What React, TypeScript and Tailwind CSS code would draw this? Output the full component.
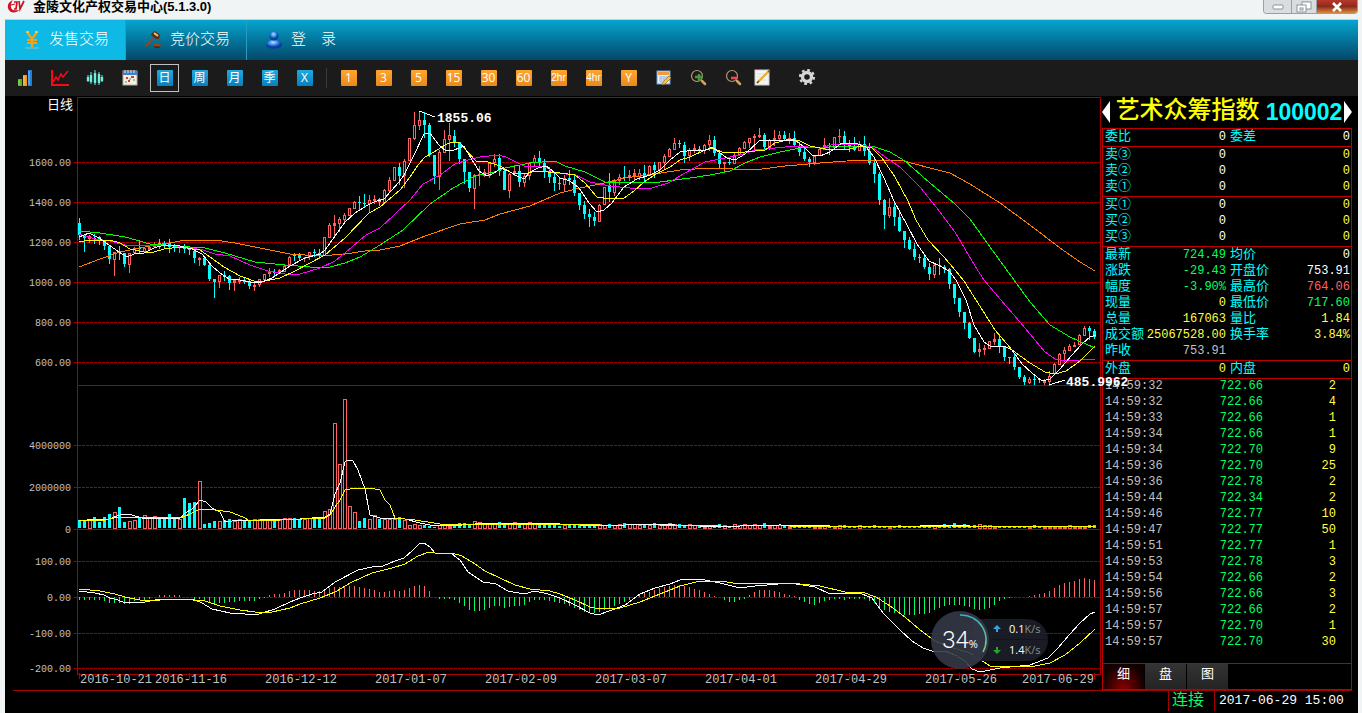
import React, { useState } from 'react';

// [rising, high, body top, body bottom, low] in chart units, one candle every 5 units
const candles: number[][] = [
  [0,218,223,235,240],[0,235,235,238,252],[1,235,236,239,243],[0,234,238,239,244],[0,236,237,241,245],[0,240,241,246,250],[0,246,246,259,264],[1,252,252,260,276],
  [0,246,252,253,260],[0,253,253,264,267],[1,253,253,265,273],[1,247,248,253,254],[0,240,248,249,253],[1,247,248,252,253],[1,246,247,250,251],[1,242,244,247,248],
  [0,239,243,245,249],[0,241,244,246,248],[0,239,243,247,253],[0,244,246,248,252],[1,245,247,248,253],[0,244,247,249,253],[0,247,249,250,255],[0,250,251,258,263],
  [1,257,258,260,266],[0,258,258,265,266],[0,264,265,279,281],[0,279,279,282,298],[1,275,275,282,288],[0,271,275,277,281],[0,275,276,283,290],[1,279,280,283,291],
  [1,277,280,282,284],[0,277,280,282,284],[0,280,281,286,289],[1,283,285,287,291],[1,279,279,285,287],[1,274,274,280,281],[1,268,272,274,277],[0,269,272,273,277],
  [1,269,270,272,274],[1,265,266,272,272],[1,256,257,265,266],[0,253,255,256,261],[0,253,254,258,261],[1,257,258,259,262],[1,252,252,257,260],[0,249,252,253,257],
  [0,249,253,255,259],[1,237,237,256,256],[1,223,225,238,238],[1,215,223,226,236],[1,217,219,224,232],[1,213,215,220,222],[1,208,208,216,216],[1,201,202,209,209],
  [0,196,202,203,210],[0,194,203,204,207],[1,195,200,204,213],[1,195,199,201,204],[0,198,199,202,206],[1,189,190,203,203],[1,177,180,191,193],[1,167,167,181,181],
  [0,163,167,176,185],[1,159,161,176,188],[1,138,138,161,161],[1,112,125,139,140],[1,111,120,126,130],[0,112,120,125,138],[0,123,125,155,157],[0,155,155,176,184],
  [1,150,152,177,190],[1,130,139,153,153],[1,123,135,140,161],[0,130,136,142,147],[0,142,142,159,164],[0,159,159,172,184],[0,172,172,188,192],[1,174,175,189,209],
  [1,166,174,175,186],[1,169,172,176,177],[1,163,163,176,178],[1,154,159,163,167],[0,154,158,171,176],[0,168,171,190,190],[1,173,174,191,198],[1,165,171,174,176],
  [0,166,171,182,187],[1,174,176,183,187],[1,162,163,176,180],[1,155,158,163,167],[0,151,158,163,167],[0,159,163,171,178],[0,167,171,177,183],[0,172,177,183,191],
  [0,178,183,184,190],[1,175,178,185,191],[0,170,178,180,185],[0,174,180,193,196],[0,193,193,205,210],[0,201,205,214,219],[0,209,214,217,227],[0,212,217,221,226],
  [1,204,205,222,222],[1,187,187,205,205],[0,173,185,192,202],[1,179,181,193,196],[1,174,177,181,185],[0,166,177,178,181],[1,170,175,178,181],[1,169,173,176,180],
  [1,169,173,177,180],[0,165,173,176,183],[1,165,166,176,176],[0,162,165,170,178],[1,162,162,170,174],[1,154,156,163,169],[1,148,149,157,157],[1,138,143,150,150],
  [0,140,143,144,148],[0,142,145,156,163],[1,148,150,156,161],[1,144,148,151,153],[0,146,149,150,152],[1,144,145,151,154],[1,135,140,145,151],[0,136,140,153,156],
  [0,153,153,164,168],[1,162,162,164,172],[0,158,162,163,165],[1,153,155,164,164],[1,147,148,155,155],[1,141,142,149,149],[1,138,138,143,148],[1,134,136,138,151],
  [1,128,135,137,138],[0,133,135,147,149],[1,139,140,148,150],[1,130,138,140,146],[1,131,135,139,140],[0,131,135,139,140],[1,133,138,139,144],[0,131,138,145,147],
  [0,142,146,152,156],[0,148,152,159,161],[0,157,159,162,167],[1,155,156,163,165],[1,148,149,156,156],[1,138,145,150,150],[0,143,145,146,155],[1,137,137,148,148],
  [1,129,136,137,143],[0,131,136,145,150],[0,140,145,147,152],[0,137,146,150,151],[1,141,144,151,151],[0,136,144,151,156],[0,143,151,163,165],[0,157,163,174,183],
  [0,172,174,200,205],[0,199,200,215,229],[1,198,207,216,218],[0,203,207,217,226],[0,212,217,231,232],[0,231,231,240,248],[0,237,240,249,250],[0,243,249,257,260],
  [0,254,257,258,263],[0,256,258,267,269],[0,263,267,274,280],[1,264,265,275,278],[0,258,265,266,275],[0,265,267,269,273],[0,268,269,284,289],[0,284,284,298,304],
  [0,298,298,312,317],[0,312,312,323,329],[0,322,323,338,339],[0,338,338,352,353],[1,343,349,352,357],[1,345,348,350,355],[1,341,341,349,349],[1,333,339,342,345],
  [0,334,339,347,353],[0,347,347,357,361],[0,357,357,358,364],[0,353,357,367,370],[0,367,367,377,379],[0,375,377,382,385],[1,377,379,383,384],[0,374,379,380,385],
  [0,378,379,380,383],[1,379,381,383,385],[1,371,376,382,386],[1,363,364,374,374],[1,353,354,365,365],[1,347,350,354,362],[1,344,346,351,351],[1,342,345,347,347],
  [1,334,335,345,345],[1,326,328,336,336],[0,326,328,331,340],[0,329,331,337,339],
];

// top of each volume bar, base line at 528
const volumes = [
  520,521,520,517,522,517,514,512,507,522,521,520,518,515,518,516,519,519,514,518,519,498,503,502,481,524,523,521,521,520,
  519,521,519,521,520,519,519,520,519,520,520,518,518,518,519,519,518,519,517,511,509,423,464,399,506,512,521,518,519,515,
  519,519,519,519,517,520,525,524,525,525,526,527,525,525,526,526,523,523,524,521,522,524,523,523,522,525,523,522,524,524,
  522,523,524,523,525,524,526,525,525,524,525,524,525,526,524,525,524,525,524,523,524,524,525,524,525,523,525,525,523,524,
  524,525,524,525,525,526,525,525,524,525,526,524,525,524,525,524,525,523,526,525,525,526,526,525,526,526,525,526,526,525,
  526,526,525,525,526,526,525,526,526,525,526,527,526,526,525,526,526,526,526,525,525,525,526,524,525,523,525,524,526,525,
  524,525,525,526,526,527,526,527,526,527,526,525,526,527,526,526,527,526,525,526,526,526,525,525,
];

// tip of each oscillator bar, zero line at 597
const bars = [
  600,600,600,600,600,601,603,603,603,604,604,601,600,600,599,597,595,595,595,595,595,597,597,599,599,600,603,604,603,603,
  602,602,601,601,601,601,599,598,595,594,594,593,591,590,590,590,590,591,591,590,588,587,587,587,586,586,587,588,589,590,
  592,592,591,590,591,590,588,586,585,586,591,597,599,599,599,600,603,606,610,611,611,610,608,606,606,608,607,606,606,605,
  602,600,600,600,601,602,603,604,606,608,610,612,613,613,612,610,608,606,604,602,600,598,595,593,592,590,588,587,586,585,
  585,586,587,589,590,592,594,596,597,600,602,602,600,599,595,592,590,590,590,591,592,594,595,596,600,602,604,605,603,601,
  600,599,599,600,599,599,599,599,601,603,607,610,612,613,614,615,615,615,614,614,613,610,608,606,605,605,605,606,607,609,
  610,609,608,605,601,599,598,597,597,597,596,595,594,593,591,588,585,583,582,581,579,578,579,580,
];

const lines = [
  { color: '#ff8000', points: '79,267 100,259 120,252 140,248 155,245 170,243 185,240 215,240 235,243 260,248 290,254 320,256 345,254 365,251 380,250 400,246 425,236 460,224 485,220 500,214 530,206 560,193 580,188 600,184 625,178 655,174 680,170 710,168 755,170 785,166 820,163 860,160 900,160 930,168 950,173 970,184 1000,203 1030,225 1060,248 1080,262 1095,271' },
  { color: '#00ff00', points: '79,231 100,233 125,237 150,244 175,246 205,248 225,253 255,262 285,265 310,267 330,267 345,263 360,257 380,245 403,230 430,204 453,188 475,176 494,172 505,168 530,163 555,161 565,166 585,172 605,182 660,182 690,178 710,175 730,171 745,163 760,157 780,152 800,148 830,147 850,146 875,147 890,152 905,161 930,183 955,204 970,219 990,247 1014,280 1030,302 1050,325 1070,337 1095,348' },
  { color: '#ff00ff', points: '79,234 95,239 110,241 125,245 155,246 170,245 190,248 203,250 215,254 230,256 250,265 268,271 285,274 300,274 320,268 335,261 352,247 366,235 380,228 395,214 410,200 423,184 440,175 455,164 468,160 480,157 498,155 506,157 524,166 545,167 556,173 576,175 590,182 610,186 630,188 652,188 668,183 685,173 705,162 725,158 740,155 755,150 775,148 795,146 820,148 835,144 862,145 872,147 885,157 900,167 920,187 940,212 955,232 975,266 984,280 1000,299 1020,322 1045,352 1055,359 1066,361 1095,359' },
  { color: '#ffff00', points: '79,242 90,240 110,240 120,243 130,249 144,252 154,252 164,249 180,247 200,250 210,257 224,267 240,276 254,281 265,281 280,278 295,271 308,264 325,255 345,238 369,213 380,207 400,190 410,177 418,165 425,157 434,152 445,145 452,142 460,143 466,150 476,161 488,162 500,166 512,173 525,174 535,171 548,172 560,173 575,175 585,183 597,197 610,199 624,198 634,191 644,182 656,174 670,167 680,160 690,157 705,150 712,148 722,152 735,153 765,150 775,143 790,139 800,141 810,146 825,149 850,149 860,146 872,148 882,158 895,177 908,201 916,220 928,240 944,257 955,270 964,281 976,300 995,330 1012,350 1030,363 1045,372 1055,374 1066,371 1080,361 1095,346' },
  { color: '#ffffff', points: '79,237 89,233 99,238 109,245 119,252 127,257 134,254 144,253 154,248 164,245 180,246 192,249 202,254 212,266 220,273 229,279 240,280 250,282 262,282 272,278 290,266 305,258 320,254 325,250 335,236 345,222 355,213 368,205 374,202 384,199 399,182 404,175 414,155 424,134 430,133 439,145 446,151 454,150 464,146 469,155 479,171 487,176 494,173 501,168 510,172 517,176 524,179 530,172 538,168 546,166 554,172 560,178 570,181 579,188 589,203 597,212 604,210 612,203 624,187 637,179 650,175 660,170 670,160 680,152 694,150 706,150 712,147 720,153 727,158 735,160 745,154 759,141 775,140 795,140 803,146 812,155 820,156 830,152 842,143 855,143 866,147 874,157 884,178 894,201 907,225 917,244 929,261 940,266 949,271 956,280 966,300 974,325 984,342 990,346 1004,346 1012,350 1022,364 1032,373 1042,381 1050,379 1060,369 1072,355 1082,344 1090,337 1096,335' },
  // volume averages
  { color: '#ffffff', points: '79,521 95,519 109,519 123,514 132,515 145,519 165,518 180,518 185,513 192,509 200,500 206,502 212,508 220,512 225,522 240,520 260,520 300,519 325,517 330,514 335,494 340,483 345,462 347,460 353,461 358,470 365,489 370,515 380,518 405,519 420,523 430,525 450,526 475,524 500,523 530,523 560,524 600,526 650,524 700,526 740,526 780,525 830,526 900,527 940,525 1000,527 1095,526' },
  { color: '#ffff00', points: '79,520 105,520 118,517 160,517 180,518 190,514 200,509 215,510 230,512 243,517 250,521 280,520 325,518 331,514 335,507 340,500 345,490 355,488 375,489 380,490 385,500 390,505 395,518 415,520 440,524 460,525 500,524 550,524 600,525 660,525 720,526 790,526 880,527 950,526 1095,527' },
  // oscillator
  { color: '#ffffff', points: '79,591 95,593 104,595 110,598 118,600 125,603 145,602 160,599 178,599 195,600 202,603 212,609 230,613 245,614 256,615 262,613 275,609 290,602 300,598 312,594 322,592 335,582 358,570 372,567 383,566 395,561 404,558 412,551 419,544 424,543 430,547 435,553 452,554 460,560 468,572 483,582 496,584 508,591 524,594 535,591 548,594 560,598 575,605 590,613 598,615 612,610 625,605 640,594 655,588 670,584 680,580 700,579 720,583 740,588 755,586 790,583 815,587 830,594 845,593 862,594 872,598 884,614 900,630 912,641 923,648 935,652 945,651 955,655 965,661 972,669 980,672 990,670 1000,668 1030,665 1048,658 1058,648 1070,634 1080,623 1090,614 1095,612' },
  { color: '#ffff00', points: '79,589 100,591 115,594 125,597 140,600 160,600 180,599 205,601 220,606 240,610 255,612 272,612 290,608 300,604 320,598 335,592 352,582 372,573 392,568 405,564 418,556 429,552 435,553 452,553 462,556 475,564 485,571 500,578 515,585 530,589 550,591 560,594 575,600 590,607 600,609 620,608 640,602 660,594 680,586 700,581 720,581 740,584 770,583 800,584 820,586 845,592 862,592 876,597 890,606 905,617 920,630 935,641 950,647 970,653 990,666 1000,667 1020,666 1035,666 1050,663 1065,655 1080,643 1095,629' },
];

const gridLabels: [number, string][] = [
  [162, '1600.00'], [202, '1400.00'], [242, '1200.00'], [282, '1000.00'], [322, '800.00'], [362, '600.00'],
  [445, '4000000'], [487, '2000000'], [529, '0'],
  [561, '100.00'], [597, '0.00'], [633, '-100.00'], [668, '-200.00'],
];

const dates: [number, string][] = [
  [116, '2016-10-21'], [191, '2016-11-16'], [301, '2016-12-12'], [411, '2017-01-07'], [521, '2017-02-09'],
  [631, '2017-03-07'], [741, '2017-04-01'], [851, '2017-04-29'], [961, '2017-05-26'], [1058, '2017-06-29'],
];
const dateTicks = [79, 189, 299, 409, 519, 629, 739, 849, 959, 1094];

const Chart: React.FC = () => (
  <svg viewBox="5 96 1097 594" className="relative z-10 block w-full overflow-visible" role="img" aria-label="日线">
    <defs>
      <pattern id="dash" x="78" y="0" width="4" height="1" patternUnits="userSpaceOnUse">
        <rect width="3" height="1" fill="#a80000" />
      </pattern>
    </defs>
    <g shapeRendering="crispEdges">
      {gridLabels.map(([y]) => (
        <g key={y}>
          {y !== 529 && <path d={`M78 ${y}H1100V${y + 1}H78z`} fill="url(#dash)" />}
          <rect x="74" y={y} width="3" height="1" fill="#a80000" />
        </g>
      ))}
      <g fill="#a80000">
        <rect x="77" y="97" width="1024" height="1" />
        <rect x="77" y="385" width="1024" height="1" />
        <rect x="77" y="529" width="1024" height="1" />
        <rect x="77" y="674" width="1024" height="1" />
        <rect x="77" y="97" width="1" height="578" />
        <rect x="1100" y="97" width="1" height="578" />
        {dateTicks.map((x) => <rect key={x} x={x} y="673" width="1" height="6" />)}
      </g>

      {candles.map(([up, high, top, bottom, low], i) => {
        const x = 79 + i * 5;
        const color = up ? '#ff6060' : '#00ffff';
        const h = Math.max(bottom - top, 1);
        return (
          <g key={i} fill={color}>
            <rect x={x} y={high} width="1" height={low - high} />
            <rect x={x - 1} y={top} width="3" height={h} />
            {up === 1 && h > 3 && <rect x={x} y={top + 1} width="1" height={h - 2} fill="#000" />}
          </g>
        );
      })}
      {volumes.map((top, i) => {
        const x = 78 + i * 5;
        if (!candles[i][0]) return <rect key={i} x={x} y={top} width="3" height={528 - top} fill="#00ffff" />;
        return (
          <g key={i}>
            <rect x={x} y={top} width="4" height={529 - top} fill="#ff6060" />
            {top < 526 && <rect x={x + 1} y={top + 1} width="2" height={527 - top} fill="#000" />}
          </g>
        );
      })}
      {bars.map((tip, i) => (
        <rect key={i} x={79 + i * 5} y={Math.min(tip, 597)} width="1" height={Math.abs(tip - 597)} fill={tip > 597 ? '#00ff60' : '#ff6060'} />
      ))}
      {lines.map((l, i) => <polyline key={i} points={l.points} fill="none" stroke={l.color} />)}
      <path d="M419 111L435 117M1049 385L1065 380" stroke="#fff" fill="none" />
    </g>
    <g className="text-[10px]" fill="#c0c0c0" textAnchor="end">
      {gridLabels.map(([y, t]) => <text key={y} x="71" y={y + 4}>{t}</text>)}
    </g>
    <g className="text-[12px]" fill="#c0c0c0" textAnchor="middle">
      {dates.map(([x, t]) => <text key={x} x={x} y="683">{t}</text>)}
    </g>
    <text x="47" y="109" className="text-[13px]" fill="#fff">日线</text>
    <g className="text-[13px] font-bold" fill="#fff">
      <text x="437" y="122">1855.06</text>
      <text x="1066" y="386">485.9962</text>
    </g>
  </svg>
);

const YenIcon = () => (
  <svg width="18" height="20" viewBox="0 0 18 20">
    <path d="M4 2L9 9L14 2M9 9V17M4 10H14M4 13H14" fill="none" stroke="#f0a41e" strokeWidth="2.2" />
    <path d="M3 2H6M12 2H15" stroke="#ffd35a" strokeWidth="1.5" />
    <path d="M2 18H16" stroke="#8fc0cc" />
  </svg>
);

const GavelIcon = () => (
  <svg width="18" height="20" viewBox="0 0 18 20">
    <path d="M2 16L11 6" stroke="#8a4a22" strokeWidth="2" strokeLinecap="round" />
    <path d="M8 3L11 1L16 5L15 9L12 9L7 5z" fill="#5a2c12" />
    <path d="M10 3L14 6" stroke="#e8c08a" strokeWidth="2" />
    <path d="M9 15C9 19 17 19 17 15z" fill="#4a1f0c" />
    <ellipse cx="13" cy="15" rx="4" ry="1.6" fill="#8f4a22" />
  </svg>
);

const UserIcon = () => (
  <svg width="18" height="20" viewBox="0 0 18 20">
    <defs>
      <radialGradient id="user" cx="45%" cy="30%">
        <stop offset="0" stopColor="#c4e4ff" />
        <stop offset="0.5" stopColor="#3d94ee" />
        <stop offset="1" stopColor="#0d3c9c" />
      </radialGradient>
    </defs>
    <path d="M1 15C2 8 16 8 17 15C17 20 1 20 1 15z" fill="url(#user)" />
    <circle cx="9" cy="6" r="4.5" fill="url(#user)" />
  </svg>
);

const Logo = () => (
  <svg width="18" height="13" viewBox="0 0 18 13">
    <path d="M6 0C0 2 -1 9 4 12C7 13 11 12 12 10C7 11 3 10 4 5C4 3 5 1 6 0z" fill="#d01020" />
    <path d="M7 2H10L9 9H7M12 1L13 9L17 1" fill="none" stroke="#c81422" strokeWidth="1.7" />
    <path d="M4 5L8 4" stroke="#c81422" />
  </svg>
);

const ChartBars = () => (
  <svg width="16" height="18" viewBox="0 0 16 18">
    <rect x="1" y="10" width="4" height="7" fill="#57b512" />
    <rect x="6" y="6" width="4" height="11" fill="#f59a12" />
    <rect x="11" y="1" width="4" height="16" fill="#1f7fe0" />
    <path d="M2 11V16M7 7V16M12 2V16" stroke="#ffffff" strokeOpacity="0.5" />
  </svg>
);

const TrendIcon = () => (
  <svg width="18" height="18" viewBox="0 0 18 18" fill="none" stroke="#f50a1a">
    <path d="M1 1V16H18" strokeWidth="2" />
    <path d="M2 13L5 8L7 11L10 5L12 8L17 2" strokeWidth="1.5" />
  </svg>
);

const WaveIcon = () => (
  <svg width="18" height="18" viewBox="0 0 18 18" stroke="#6ff0dc">
    <path d="M2 6V13M5 3V15M9 1V16M13 3V16M16 6V13" />
    <path d="M2 8V12M5 6V13M9 4V14M13 5V14M16 8V12" strokeWidth="2.4" />
  </svg>
);

const CalendarIcon = () => (
  <svg width="16" height="18" viewBox="0 0 16 18">
    <rect x="1" y="2" width="14" height="14" fill="#f2efe6" stroke="#b9ad98" />
    <rect x="1" y="2" width="14" height="4" fill="#3f7fd0" />
    <path d="M3 1V4M6 1V4M9 1V4M12 1V4" stroke="#dbe8fa" />
    <path d="M4 9H6M9 8H12M6 12H8" stroke="#e03818" strokeWidth="2" />
    <path d="M7 10H9M11 11H13M3 13H5" stroke="#777" />
  </svg>
);

const CalendarEdit = () => (
  <svg width="16" height="16" viewBox="0 0 16 16">
    <rect x="1" y="1" width="13" height="13" fill="#e9f2fd" stroke="#6d9edc" />
    <rect x="2" y="2" width="11" height="3" fill="#f09a3c" />
    <path d="M3 7H12M3 9H12M3 11H10M5 6V13M8 6V12M11 6V10" stroke="#9cbbe4" />
    <path d="M6 15L7 12L13 6L15 8L9 14z" fill="#f5c242" stroke="#9a6a1a" strokeWidth="0.7" />
  </svg>
);

const ZoomIcon: React.FC<{ sign: 'in' | 'out' }> = ({ sign }) => (
  <svg width="18" height="18" viewBox="0 0 18 18">
    <circle cx="7" cy="7" r="5.5" fill="none" stroke="#b59a72" strokeWidth="1.2" />
    <path d="M12 12L15 15" stroke="#d8a060" strokeWidth="2.5" strokeLinecap="round" />
    {sign === 'in'
      ? <path d="M9 5V12M5 8H13" stroke="#4a9a3c" strokeWidth="2.4" />
      : <path d="M6 9H13" stroke="#f04a42" strokeWidth="2.6" />}
  </svg>
);

const NoteIcon = () => (
  <svg width="18" height="18" viewBox="0 0 18 18">
    <rect x="1" y="1" width="14" height="15" fill="#f4f4f2" stroke="#cfcfcb" />
    <path d="M3 5H11M3 8H9M3 11H12" stroke="#ddd" />
    <path d="M3 14L15 2" stroke="#e5ad2b" strokeWidth="2.2" />
    <path d="M3 14L5 12M14 3L16 1" stroke="#555" strokeWidth="1.5" />
  </svg>
);

const GearIcon = () => (
  <svg width="18" height="18" viewBox="0 0 18 18" fill="none" stroke="#d6d6d6">
    <circle cx="9" cy="8" r="4.5" strokeWidth="3.4" />
    <circle cx="9" cy="8" r="7" strokeWidth="2.2" strokeDasharray="2.75 2.75" />
  </svg>
);

const navItems = [
  { icon: <YenIcon />, label: '发售交易' },
  { icon: <GavelIcon />, label: '竞价交易' },
  { icon: <UserIcon />, label: '登　录' },
];
const periods = ['日', '周', '月', '季', 'X'];
const minutes = ['1', '3', '5', '15', '30', '60', '2hr', '4hr', 'Y'];

const W = 'text-white';
const Y = 'text-[#ffff40]';
const G = 'text-[#00ff60]';
const R = 'text-[#ff6060]';
const S = 'text-[#c0c0c0]';

type Row = [string, string, string, string, string, string];
const quoteSections: Row[][] = [
  [['委比', '0', W, '委差', '0', W]],
  [['卖③', '0', W, '', '0', Y], ['卖②', '0', W, '', '0', Y], ['卖①', '0', W, '', '0', Y]],
  [['买①', '0', W, '', '0', Y], ['买②', '0', W, '', '0', Y], ['买③', '0', W, '', '0', Y]],
  [
    ['最新', '724.49', G, '均价', '0', W],
    ['涨跌', '-29.43', G, '开盘价', '753.91', W],
    ['幅度', '-3.90%', G, '最高价', '764.06', R],
    ['现量', '0', Y, '最低价', '717.60', G],
    ['总量', '167063', Y, '量比', '1.84', Y],
    ['成交额', '25067528.00', Y, '换手率', '3.84%', Y],
    ['昨收', '753.91', S, '', '', W],
  ],
  [['外盘', '0', Y, '内盘', '0', Y]],
];

const trades = [
  ['14:59:32', '722.66', '2'], ['14:59:32', '722.66', '4'], ['14:59:33', '722.66', '1'], ['14:59:34', '722.66', '1'],
  ['14:59:34', '722.70', '9'], ['14:59:36', '722.70', '25'], ['14:59:36', '722.78', '2'], ['14:59:44', '722.34', '2'],
  ['14:59:46', '722.77', '10'], ['14:59:47', '722.77', '50'], ['14:59:51', '722.77', '1'], ['14:59:53', '722.78', '3'],
  ['14:59:54', '722.66', '2'], ['14:59:56', '722.66', '3'], ['14:59:57', '722.66', '2'], ['14:59:57', '722.70', '1'],
  ['14:59:57', '722.70', '30'],
];

const QuoteTable: React.FC<{ rows: Row[] }> = ({ rows }) => (
  <div className="border-b border-[#c00000] px-px pb-px">
    <table className="w-full table-fixed">
      <colgroup>
        <col className="w-10" />
        <col className="w-[82px]" />
        <col className="w-12" />
        <col />
      </colgroup>
      <tbody>
        {rows.map(([a, av, ac, b, bv, bc]) => (
          <tr key={a} className="h-4 whitespace-nowrap leading-4">
            <th className="pl-px text-left text-[13px] font-normal text-[#00ffff]">{a}</th>
            <td className={`${ac} text-right text-[12px]`}>{av}</td>
            <th className="pl-1 text-left text-[13px] font-normal text-[#00ffff]">{b}</th>
            <td className={`${bc} text-right text-[12px]`}>{bv}</td>
          </tr>
        ))}
      </tbody>
    </table>
  </div>
);

const SpeedWidget = () => (
  <div className="absolute bottom-[21px] right-[54px] z-20 flex items-center font-['Open_Sans',sans-serif]">
    <div className="relative z-10 flex h-[58px] w-[58px] items-center justify-center rounded-full bg-[#343847]/90 text-white">
      <svg className="absolute inset-0" viewBox="0 0 58 58" fill="none">
        <defs>
          <linearGradient id="ring" x1="0" y1="0" x2="0" y2="1">
            <stop offset="0" stopColor="#35b5c0" />
            <stop offset="1" stopColor="#7ecb7a" />
          </linearGradient>
        </defs>
        <path d="M29 4A25 25 0 0 1 52 41" stroke="url(#ring)" strokeWidth="1.5" />
      </svg>
      <span className="font-['Roboto',sans-serif] text-2xl font-light">34</span>
      <span className="pt-2 text-[11px]">%</span>
    </div>
    <div className="-ml-4 flex h-[42px] w-[75px] flex-col justify-center rounded-r-full bg-[#1a1d26]/95 pl-5 text-[11px] text-white">
      <div className="flex h-[21px] items-center gap-2 border-b border-[#12141b]">
        <svg width="8" height="8" viewBox="0 0 8 8"><path d="M4 0L8 4H5V7H3V4H0z" fill="#3aa0e0" /></svg>
        <span>0.1<span className="text-[#8b8e96]">K/s</span></span>
      </div>
      <div className="flex h-[21px] items-center gap-2">
        <svg width="8" height="8" viewBox="0 0 8 8"><path d="M4 7L8 3H5V0H3V3H0z" fill="#28a428" /></svg>
        <span>1.4<span className="text-[#8b8e96]">K/s</span></span>
      </div>
    </div>
  </div>
);

const App: React.FC = () => {
  const [nav, setNav] = useState(0);
  const [period, setPeriod] = useState('日');
  const [tab, setTab] = useState('细');

  const toolButton = 'flex h-9 w-[35px] items-center justify-center';

  return (
    <div className="flex min-h-screen flex-col bg-[#f1f4f5] pl-[5px] pr-1 font-['Liberation_Mono','Noto_Sans_CJK_SC',monospace]">
      <header className="flex h-[19px] items-start justify-between">
        <div className="flex items-start gap-2 pl-0.5">
          <Logo />
          <h1 className="font-['Liberation_Sans','Noto_Sans_CJK_SC',sans-serif] text-[13px] font-bold leading-[14px] text-black">金陵文化产权交易中心(5.1.3.0)</h1>
        </div>
        <div className="flex h-3.5 overflow-hidden rounded-b border border-t-0 border-[#9aa0a6]">
          <button aria-label="最小化" className="flex w-[27px] items-center justify-center bg-[#d9dde0]">
            <svg width="12" height="6" viewBox="0 0 12 6"><rect x="1" y="1" width="10" height="4" rx="1" fill="#fff" stroke="#8d9298" /></svg>
          </button>
          <button aria-label="还原" className="flex w-[26px] items-center justify-center border-x border-[#9aa0a6] bg-[#d9dde0]">
            <svg width="16" height="12" viewBox="0 0 16 12" fill="#fff" stroke="#8d9298">
              <rect x="6" y="1" width="9" height="7" />
              <rect x="1" y="4" width="9" height="7" />
              <rect x="4" y="7" width="3" height="2" />
            </svg>
          </button>
          <button aria-label="关闭" className="flex w-10 items-center justify-center bg-linear-to-b from-[#b8382c] via-[#8e2a1c] to-[#d88a3c]">
            <svg width="12" height="10" viewBox="0 0 12 10"><path d="M2 1L10 9M10 1L2 9" stroke="#fff" strokeWidth="2.6" /></svg>
          </button>
        </div>
      </header>

      <nav className="flex h-[41px] border-t border-[#c9cdcf] bg-linear-to-b from-[#05a6d1] to-[#03486a]">
        {navItems.map((item, i) => (
          <button
            key={item.label}
            onClick={() => setNav(i)}
            className={`flex items-center gap-2 pl-[18px] text-[15px] font-light text-white ${i < 2 ? 'w-[121px] border-r border-[#2a9cc4]' : ''} ${nav === i ? 'bg-[#0fb9e6]' : ''}`}
          >
            {item.icon}
            <span className="whitespace-nowrap pt-0.5">{item.label}</span>
          </button>
        ))}
      </nav>

      <div className="flex h-9 items-center bg-[#1b1b1b] pl-0.5">
        <div className="flex">
          <button aria-label="柱状图" className={toolButton}><ChartBars /></button>
          <button aria-label="走势" className={toolButton}><TrendIcon /></button>
          <button aria-label="K线" className={toolButton}><WaveIcon /></button>
          <button aria-label="日历" className={toolButton}><CalendarIcon /></button>
        </div>
        {periods.map((p) => (
          <button key={p} onClick={() => setPeriod(p)} className={toolButton}>
            <span className={`flex h-7 w-[29px] items-center justify-center border ${period === p ? 'border-[#c0c0c0]' : 'border-transparent'}`}>
              <span className="h-4 w-4 rounded-[1px] bg-linear-to-b from-[#1eaae0] to-[#0780bd] text-center font-['Open_Sans','Noto_Sans_CJK_SC',sans-serif] text-[12px] leading-4 text-white">{p}</span>
            </span>
          </button>
        ))}
        <span className="ml-1 mr-1 h-5 w-px bg-[#3a3a3a]" />
        {minutes.map((m) => (
          <button key={m} className={toolButton}>
            <span className={`flex h-4 w-4 items-center justify-center rounded-[1px] bg-linear-to-b from-[#ffa62e] to-[#e88a1c] leading-4 text-white ${m.length > 2 ? "font-['Liberation_Sans',sans-serif] text-[10px]" : "font-['Open_Sans',sans-serif] text-[12px]"}`}>{m}</span>
          </button>
        ))}
        <button aria-label="日期设置" className={toolButton}><CalendarEdit /></button>
        <button aria-label="放大" className={toolButton}><ZoomIcon sign="in" /></button>
        <button aria-label="缩小" className={toolButton}><ZoomIcon sign="out" /></button>
        <button aria-label="画线" className="flex h-9 w-6 items-center justify-center"><NoteIcon /></button>
        <button aria-label="设置" className={`${toolButton} ml-3.5`}><GearIcon /></button>
      </div>

      <main className="flex bg-black">
        <div className="relative min-w-0 flex-1">
          <Chart />
          <SpeedWidget />
        </div>

        <aside className="flex w-64 shrink-0 flex-col pr-1.5">
          <div className="flex h-8 items-center justify-between whitespace-nowrap">
            <button aria-label="上一个"><svg width="8" height="22" viewBox="0 0 8 22"><path d="M8 0V22L0 11z" fill="#fff" /></svg></button>
            <div className="flex gap-1.5 pl-1">
              <h2 className="text-2xl font-medium leading-8 text-[#ffff00]">艺术众筹指数</h2>
              <span className="font-['Liberation_Sans',sans-serif] text-[23px] font-bold leading-8 text-[#00ffff]">100002</span>
            </div>
            <button aria-label="下一个"><svg width="8" height="22" viewBox="0 0 8 22"><path d="M0 0V22L8 11z" fill="#fff" /></svg></button>
          </div>
          <div className="flex flex-1 flex-col border border-[#c00000]">
            {quoteSections.map((rows) => <QuoteTable key={rows[0][0]} rows={rows} />)}
            <table className="w-full table-fixed text-[12px]">
              <tbody>
                {trades.map(([time, price, count], i) => (
                  <tr key={i} className="h-4 leading-[14px]">
                    <td className="w-20 pl-0.5 align-top text-[#c0c0c0]">{time}</td>
                    <td className={`${G} w-20 text-right align-top`}>{price}</td>
                    <td className={`${Y} pr-[15px] text-right align-top`}>{count}</td>
                  </tr>
                ))}
              </tbody>
            </table>
            <div className="mt-auto flex h-[26px] gap-px border-t border-[#c00000]">
              {['细', '盘', '图'].map((t) => (
                <button
                  key={t}
                  onClick={() => setTab(t)}
                  className={`w-[41px] pb-1 text-[13px] text-white ${tab === t ? 'bg-[radial-gradient(ellipse_at_bottom,#8a0000,#100000_75%)]' : 'bg-linear-to-b from-[#333] to-[#242424]'}`}
                >
                  {t}
                </button>
              ))}
            </div>
          </div>
        </aside>
      </main>

      <footer className="flex flex-1 bg-black pl-2 pr-1.5">
        <div className="flex flex-1 items-start justify-end border-t border-[#a80000]">
          <span className="w-[46px] border-l border-[#a80000] pl-[3px] text-base leading-5 text-[#00ff60]">连接</span>
          <time className="w-[138px] border-l border-[#a80000] pl-1 text-[13px] leading-5 text-white">2017-06-29 15:00</time>
        </div>
      </footer>
    </div>
  );
};

export default App;
